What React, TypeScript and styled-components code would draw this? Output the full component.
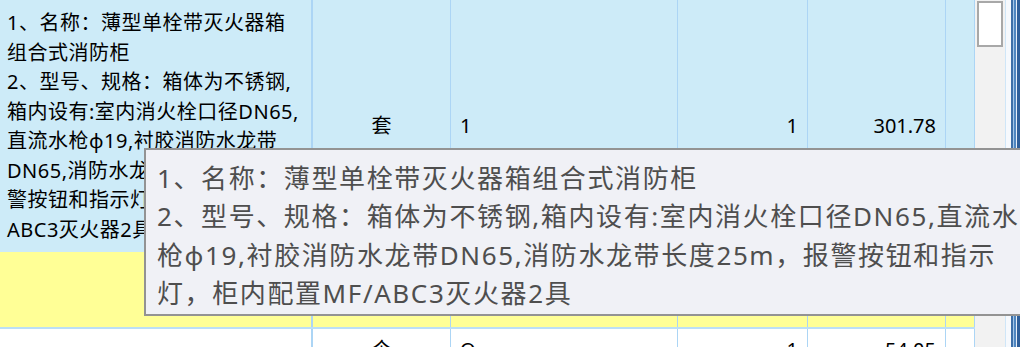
import React from "react";
import styled, { createGlobalStyle } from "styled-components";

const GlobalStyle = createGlobalStyle`
  html, body {
    margin: 0;
    padding: 0;
    overflow: hidden;
    background: #ffffff;
  }
  body {
    font-family: "Noto Sans", "Noto Sans CJK SC", sans-serif;
    color: #000;
  }
`;

const COLUMNS = "313px 138px 227px 130px 138px 29px";

const Screen = styled.div`
  position: relative;
  display: flex;
  width: 1020px;
  height: 347px;
  overflow: hidden;
`;

const Grid = styled.div`
  width: 975px;
  display: flex;
  flex-direction: column;
`;

const Row = styled.div<{ $bg: string; $height: number; $line: string }>`
  display: grid;
  grid-template-columns: ${COLUMNS};
  height: ${(p) => p.$height}px;
  flex: none;
  background: ${(p) => p.$bg};
  border-bottom: ${(p) => p.$line};
`;

const Cell = styled.div<{ $align?: "left" | "center" | "right"; $wide?: boolean }>`
  display: flex;
  align-items: center;
  justify-content: ${(p) =>
    p.$align === "right" ? "flex-end" : p.$align === "center" ? "center" : "flex-start"};
  padding: 0 ${(p) => (p.$align === "right" ? "9px" : "0")} 0
    ${(p) => (p.$align === "left" ? "9px" : "0")};
  border-right: ${(p) => (p.$wide ? "2px" : "1px")} solid #acd5f5;
  font-size: 20px;
  line-height: 28px;
  white-space: nowrap;
  overflow: hidden;
`;

const DescCell = styled(Cell)`
  padding: 0 0 0 7px;
  font-family: "Noto Sans", "Noto Sans CJK SC", sans-serif;
  font-size: 20px;
  letter-spacing: 0.5px;
  line-height: 29.5px;
`;

const Lines = styled.div`
  display: flex;
  flex-direction: column;
`;

const ScrollTrack = styled.div`
  width: 30px;
  background: #f2f2f2;
  padding: 1px 2px 0 2px;
  box-sizing: border-box;
`;

const Thumb = styled.div`
  height: 46px;
  background: #ffffff;
  border: 2px solid #a8a8a8;
  box-sizing: border-box;
`;

const WindowEdge = styled.div`
  flex: 1;
  background: linear-gradient(
    to right,
    #cfe6f8 0,
    #cfe6f8 1px,
    #f6f9fd 1px,
    #f6f9fd 6px,
    #3d6fa8 6px,
    #3d6fa8 8px,
    #a3c6e8 8px,
    #a3c6e8 9px,
    #4f86c0 9px,
    #4f86c0 11px,
    #e6eef8 11px,
    #e6eef8 12px,
    #2f5f9a 12px
  );
`;

const Tooltip = styled.div`
  position: absolute;
  left: 144px;
  top: 148px;
  width: 900px;
  height: 168px;
  box-sizing: border-box;
  padding: 9px 11px;
  background: #f0f1f6;
  border: 2px solid #939393;
  color: #4e4e4e;
  font-family: "Noto Sans", "Noto Sans CJK SC", sans-serif;
  font-size: 26px;
  letter-spacing: 1.6px;
  line-height: 38.3px;
  white-space: nowrap;
`;

const descLines = [
  "1、名称：薄型单栓带灭火器箱",
  "组合式消防柜",
  "2、型号、规格：箱体为不锈钢,",
  "箱内设有:室内消火栓口径DN65,",
  "直流水枪φ19,衬胶消防水龙带",
  "DN65,消防水龙带长度25m，报",
  "警按钮和指示灯，柜内配置MF/",
  "ABC3灭火器2具",
];

const tipLines = [
  "1、名称：薄型单栓带灭火器箱组合式消防柜",
  "2、型号、规格：箱体为不锈钢,箱内设有:室内消火栓口径DN65,直流水",
  "枪φ19,衬胶消防水龙带DN65,消防水龙带长度25m，报警按钮和指示",
  "灯，柜内配置MF/ABC3灭火器2具",
];

const App = () => {
  return (
    <Screen>
      <GlobalStyle />
      <Grid>
        <Row $bg="#cdebf8" $height={252} $line="none">
          <DescCell $wide>
            <Lines>
              {descLines.map((l) => (
                <span key={l}>{l}</span>
              ))}
            </Lines>
          </DescCell>
          <Cell $align="center">套</Cell>
          <Cell $align="left">1</Cell>
          <Cell $align="right">1</Cell>
          <Cell $align="right">301.78</Cell>
          <Cell />
        </Row>
        <Row $bg="#ffff96" $height={75} $line="2px solid #bcdff6">
          <Cell $wide />
          <Cell />
          <Cell />
          <Cell />
          <Cell />
          <Cell />
        </Row>
        <Row $bg="#ffffff" $height={42} $line="none">
          <Cell $wide />
          <Cell $align="center">个</Cell>
          <Cell $align="left">Q</Cell>
          <Cell $align="right">1</Cell>
          <Cell $align="right">54.05</Cell>
          <Cell />
        </Row>
      </Grid>
      <ScrollTrack>
        <Thumb />
      </ScrollTrack>
      <WindowEdge />
      <Tooltip>
        {tipLines.map((l) => (
          <div key={l}>{l}</div>
        ))}
      </Tooltip>
    </Screen>
  );
};

export default App;
